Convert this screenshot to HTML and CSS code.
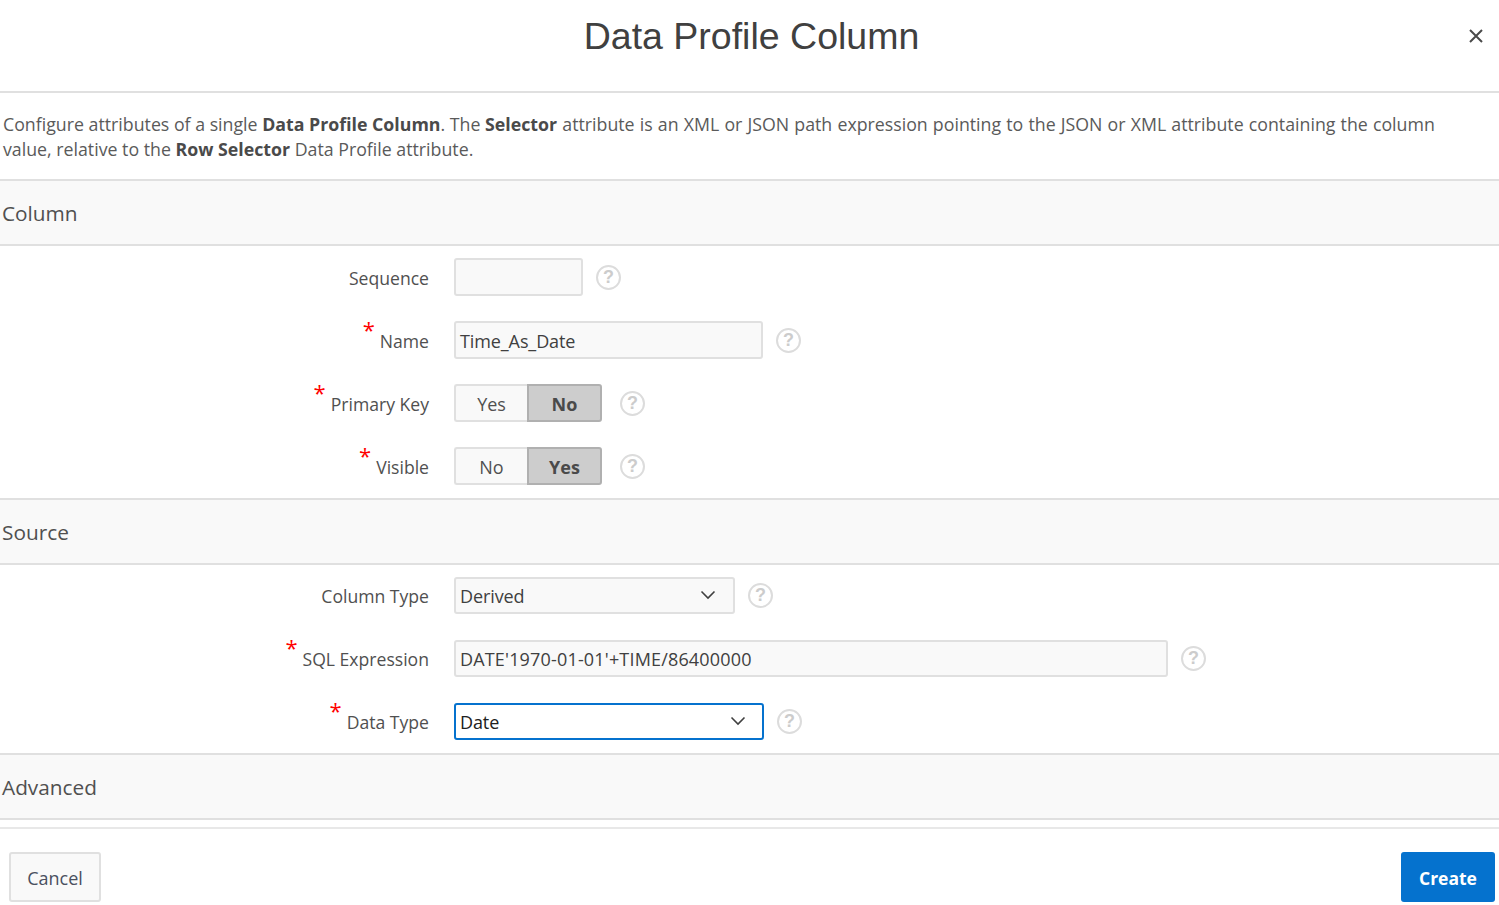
FILE: index.html
```html
<!DOCTYPE html>
<html lang="en">
<head>
<meta charset="utf-8">
<title>Data Profile Column</title>
<link rel="stylesheet" href="styles.css">
</head>
<body>
<div class="dialog">
  <header class="titlebar">
    <h1 class="title">Data Profile Column</h1>
    <button class="close" aria-label="Close"><svg width="14" height="14" viewBox="0 0 14 14"><path d="M1 1L13 13M13 1L1 13" stroke="#4a4a4a" stroke-width="2" fill="none"/></svg></button>
  </header>
  <p class="intro">Configure attributes of a single <b>Data Profile Column</b>. The <b>Selector</b><span class="tail"> attribute is an XML or JSON path expression pointing to the JSON or XML attribute containing the column</span><br>value, relative to the <b>Row Selector</b> Data Profile attribute.</p>

  <h2 class="section">Column</h2>
  <div class="rows">
    <div class="row">
      <label class="label">Sequence</label>
      <div class="field w-seq"></div>
      <span class="help">?</span>
    </div>
    <div class="row">
      <label class="label"><span class="req">*</span>Name</label>
      <div class="field w-name">Time_As_Date</div>
      <span class="help">?</span>
    </div>
    <div class="row">
      <label class="label"><span class="req">*</span>Primary Key</label>
      <div class="toggle"><span class="opt">Yes</span><span class="opt on">No</span></div>
      <span class="help">?</span>
    </div>
    <div class="row">
      <label class="label"><span class="req">*</span>Visible</label>
      <div class="toggle"><span class="opt">No</span><span class="opt on">Yes</span></div>
      <span class="help">?</span>
    </div>
  </div>

  <h2 class="section">Source</h2>
  <div class="rows tight">
    <div class="row">
      <label class="label">Column Type</label>
      <div class="field select w-type">Derived<svg class="chev" width="16" height="10" viewBox="0 0 16 10"><path d="M1.5 1.5L8 8L14.5 1.5" stroke="#404040" stroke-width="1.6" fill="none"/></svg></div>
      <span class="help">?</span>
    </div>
    <div class="row">
      <label class="label"><span class="req">*</span>SQL Expression</label>
      <div class="field w-sql">DATE'1970-01-01'+TIME/86400000</div>
      <span class="help">?</span>
    </div>
    <div class="row">
      <label class="label"><span class="req">*</span>Data Type</label>
      <div class="field select focus w-data">Date<svg class="chev" width="16" height="10" viewBox="0 0 16 10"><path d="M1.5 1.5L8 8L14.5 1.5" stroke="#404040" stroke-width="1.6" fill="none"/></svg></div>
      <span class="help">?</span>
    </div>
  </div>

  <h2 class="section">Advanced</h2>
  <footer class="footer">
    <button class="btn">Cancel</button>
    <button class="btn primary">Create</button>
  </footer>
</div>
</body>
</html>
```
FILE: styles.css
```css
html, body { margin: 0; padding: 0; background: #fff; }
body { font-family: "Open Sans", "Noto Sans", sans-serif; color: #404040; overflow: hidden; }
.dialog { width: 1499px; height: 905px; display: flex; flex-direction: column; }
.titlebar { height: 91px; flex: none; border-bottom: 2px solid #e0e0e0; position: relative; display: flex; justify-content: center; }
.title { margin: 14px 0 0 4px; font: 400 37.5px/44px "Liberation Sans", Arial, sans-serif; color: #404040; }
.close { position: absolute; top: 29px; left: 1469px; width: 14px; height: 14px; padding: 0; border: 0; background: none; display: flex; }
.intro { margin: 0; height: 86px; box-sizing: border-box; padding: 19px 40px 0 3px; font-size: 17.75px; line-height: 25px; color: #5a5a5a; white-space: nowrap; }
.intro b { font-weight: 700; color: #4a4a4a; }
.tail { word-spacing: 0.55px; }
.section { margin: 0; height: 67px; flex: none; box-sizing: border-box; border-top: 2px solid #e0e0e0; border-bottom: 2px solid #e0e0e0; background: #f9f9f9; padding: 2px 0 0 2px; font-size: 20.8px; line-height: 61px; font-weight: 400; color: #505050; }
.rows { padding: 12px 0 13px; display: flex; flex-direction: column; gap: 25px; }
.row { display: flex; align-items: center; height: 38px; }
.label { width: 429px; flex: none; text-align: right; font-size: 17.6px; color: #505050; line-height: 24px; padding-top: 2px; box-sizing: border-box; }
.req { color: #f00; font-size: 22px; line-height: 10px; position: relative; top: -10px; margin-right: 5px; }
.field { margin-left: 25px; height: 38px; box-sizing: border-box; border: 2px solid #e0e0e0; border-radius: 3px; background: #f9f9f9; padding: 0 4px; font-size: 18px; line-height: 36px; letter-spacing: -0.1px; color: #404040; position: relative; }
.w-seq { width: 129px; }
.w-name { width: 309px; }
.w-type { width: 281px; }
.w-sql { width: 714px; letter-spacing: 0.17px; }
.w-data { width: 310px; }
.focus { border-color: #0572ce; background: #fff; color: #202020; }
.chev { position: absolute; right: 17px; top: 11px; }
.focus .chev { right: 16px; }
.toggle { margin-left: 25px; display: flex; height: 38px; width: 148px; }
.opt { width: 73px; text-align: center; box-sizing: border-box; border: 2px solid #e0e0e0; border-right: 0; border-radius: 3px 0 0 3px; background: #f9f9f9; font-size: 18px; line-height: 36px; color: #505050; }
.opt.on { width: 75px; border: 2px solid #b0b0b0; border-radius: 0 3px 3px 0; background: #cdcdcd; font-weight: 700; color: #4a4a4a; }
.help { flex: none; align-self: flex-start; margin: 7px 0 0 13px; width: 25px; height: 25px; box-sizing: border-box; border: 2px solid #dcdcdc; border-radius: 50%; text-align: center; font: 700 18px/21px "Liberation Sans", sans-serif; color: #cccccc; }
.toggle + .help { margin-left: 18px; }
.tight { gap: 26px; }
.tight .row { height: 37px; }
.tight .label { padding-top: 0; }
.tight .field { height: 37px; line-height: 35px; }
.tight .help { margin-top: 6px; }
.footer { margin-top: 7px; border-top: 2px solid #e8e8e8; padding: 23px 4px 0 9px; display: flex; justify-content: space-between; align-items: flex-start; }
.btn { width: 92px; height: 50px; box-sizing: border-box; border: 2px solid #e0e0e0; border-radius: 3px; background: #f9f9f9; font-family: "Open Sans", sans-serif; font-size: 18px; color: #4a5060; padding: 2px 0 0; }
.primary { width: 94px; border: 0; background: #0572ce; color: #fff; font-weight: 700; font-size: 17.5px; }
```
